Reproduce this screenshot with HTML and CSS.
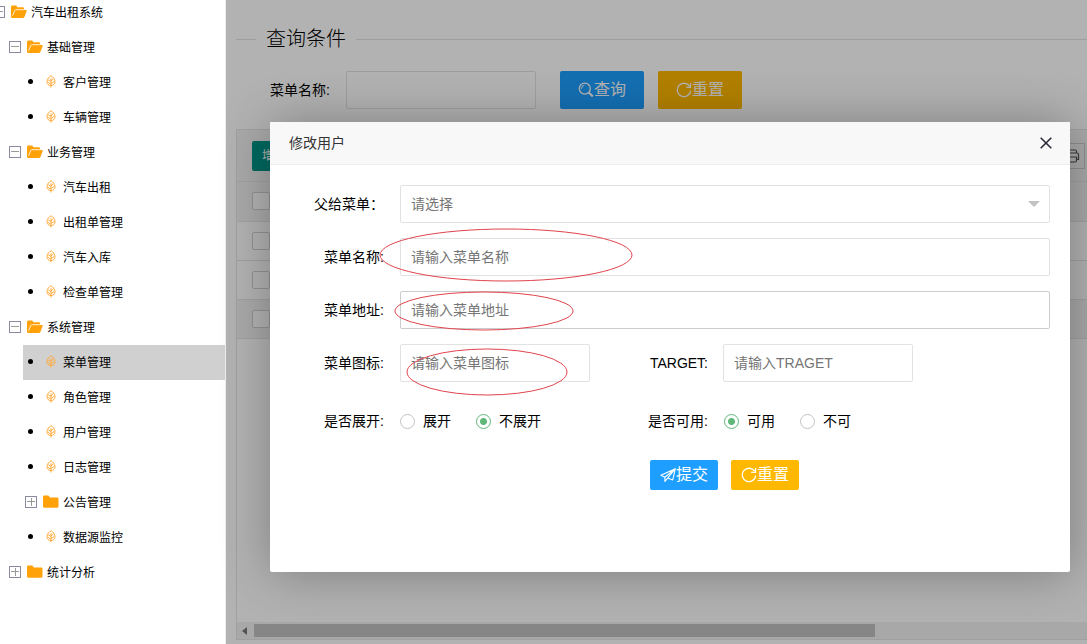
FILE: index.html
```
<!DOCTYPE html>
<html lang="zh-CN">
<head>
<meta charset="utf-8">
<title>汽车出租系统</title>
<link rel="stylesheet" href="styles.css">
</head>
<body>
<svg class="sprite" aria-hidden="true">
  <symbol id="i-open" viewBox="0 0 16 14"><path fill="#ffa20a" d="M0 11.800V2Q0 .6 1.400.6h3.400q.8 0 1.200.9l.3.700h5.500q1.300 0 1.300 1.200v1.500h1.600q1.500 0 1 1.200l-2.200 5.600q-.5 1.300-1.700 1.300H1.500Q0 13 0 11.800z"/><path fill="none" stroke="#fff" stroke-width=".8" d="M1.500 10.800 3.900 5.300q.3-.6 1-.6h8.200"/></symbol>
  <symbol id="i-folder" viewBox="0 0 16 14"><path fill="#ffa20a" d="M0 1.700Q0 .6 1.100.6h4q.7 0 1 .7l.6 1.200h7.700q1.100 0 1.100 1.100v8q0 1.100-1.100 1.100H1.100Q0 12.700 0 11.600z"/></symbol>
  <symbol id="i-leaf" viewBox="0 0 10 13"><path fill="none" stroke="#ffab3d" d="M5 .8C3.200 1.700 1 3.800 1 6.700c0 2.400 1.600 3.900 4 3.900s4-1.500 4-3.900C9 3.800 6.800 1.700 5 .8zM5 3.200v9.300M5 5.800 7.400 4M5 8.600l3.500-2.300M5 6.500 2.200 4.800M5 9.300 1.700 7.200"/></symbol>
  <symbol id="i-refresh" viewBox="0 0 16 16"><path fill="none" stroke="currentColor" stroke-width="1.300" d="M13.600 4.200A6.700 6.700 0 1 0 14.700 8.600M14.500 1v4.300h-4.300"/></symbol>
  <symbol id="i-search" viewBox="0 0 16 16"><g fill="none" stroke="currentColor"><circle cx="6.800" cy="6.600" r="5.500" stroke-width="1.300"/><path stroke-width="1" d="M3.500 6.800a3.300 3.300 0 0 1 2.800-3.400"/><path stroke-width="2.200" d="m11 10.800 3.800 3.700"/></g></symbol>
  <symbol id="i-send" viewBox="0 0 16 16"><path fill="none" stroke="currentColor" stroke-width="1.100" stroke-linejoin="round" d="M15.300 1.700.9 8.300l4 1.900L15.300 1.700 12.700 13l-5-1.900L15.300 1.700M4.900 10.200v4.200l2.800-3.300"/></symbol>
</svg>
<aside class="side">
  <nav class="tree" aria-label="菜单">
    <div class="node l0"><button class="toggle" aria-label="收起"></button><svg class="dir"><use href="#i-open"/></svg><span>汽车出租系统</span></div>
    <div class="node l1"><button class="toggle" aria-label="收起"></button><svg class="dir"><use href="#i-open"/></svg><span>基础管理</span></div>
    <div class="node l2"><i class="dot"></i><svg class="leaf"><use href="#i-leaf"/></svg><span>客户管理</span></div>
    <div class="node l2"><i class="dot"></i><svg class="leaf"><use href="#i-leaf"/></svg><span>车辆管理</span></div>
    <div class="node l1"><button class="toggle" aria-label="收起"></button><svg class="dir"><use href="#i-open"/></svg><span>业务管理</span></div>
    <div class="node l2"><i class="dot"></i><svg class="leaf"><use href="#i-leaf"/></svg><span>汽车出租</span></div>
    <div class="node l2"><i class="dot"></i><svg class="leaf"><use href="#i-leaf"/></svg><span>出租单管理</span></div>
    <div class="node l2"><i class="dot"></i><svg class="leaf"><use href="#i-leaf"/></svg><span>汽车入库</span></div>
    <div class="node l2"><i class="dot"></i><svg class="leaf"><use href="#i-leaf"/></svg><span>检查单管理</span></div>
    <div class="node l1"><button class="toggle" aria-label="收起"></button><svg class="dir"><use href="#i-open"/></svg><span>系统管理</span></div>
    <div class="node l2 active"><i class="dot"></i><svg class="leaf"><use href="#i-leaf"/></svg><span>菜单管理</span></div>
    <div class="node l2"><i class="dot"></i><svg class="leaf"><use href="#i-leaf"/></svg><span>角色管理</span></div>
    <div class="node l2"><i class="dot"></i><svg class="leaf"><use href="#i-leaf"/></svg><span>用户管理</span></div>
    <div class="node l2"><i class="dot"></i><svg class="leaf"><use href="#i-leaf"/></svg><span>日志管理</span></div>
    <div class="node l2"><button class="toggle plus" aria-label="展开"></button><svg class="dir"><use href="#i-folder"/></svg><span>公告管理</span></div>
    <div class="node l2"><i class="dot"></i><svg class="leaf"><use href="#i-leaf"/></svg><span>数据源监控</span></div>
    <div class="node l1"><button class="toggle plus" aria-label="展开"></button><svg class="dir"><use href="#i-folder"/></svg><span>统计分析</span></div>
  </nav>
</aside>
<main class="main">
  <fieldset class="title"><legend>查询条件</legend></fieldset>
  <form class="search">
    <label for="q">菜单名称:</label>
    <input class="input short" id="q" type="text">
    <button class="btn blue" type="button"><svg><use href="#i-search"/></svg>查询</button>
    <button class="btn amber" type="reset"><svg><use href="#i-refresh"/></svg>重置</button>
  </form>
  <section class="grid">
    <div class="toolbar">
      <button class="add" type="button">增加</button>
      <button class="print" type="button" aria-label="打印"><svg viewBox="0 0 16 16"><path fill="none" stroke="#555" stroke-width="1.200" stroke-linejoin="round" d="M3.500 5V2h7.500q1.500 0 1.500 1.500V5M3.500 11.500h-2V5H13q1.500 0 1.500 1.500v5h-2M3.500 9h9v3.500q0 1.500-1.500 1.500H3.500z"/></svg></button>
    </div>
    <table class="rows">
      <thead><tr><th><input type="checkbox" aria-label="全选"></th></tr></thead>
      <tbody>
        <tr><td><input type="checkbox" aria-label="选择"></td></tr>
        <tr><td><input type="checkbox" aria-label="选择"></td></tr>
        <tr class="hover"><td><input type="checkbox" aria-label="选择"></td></tr>
      </tbody>
    </table>
    <div class="scroll"><i class="arrow"></i><i class="thumb"></i></div>
  </section>
  <div class="shade"></div>
  <section class="modal" role="dialog" aria-labelledby="mt">
    <header class="modal-head">
      <h2 id="mt">修改用户</h2>
      <button class="close" type="button" aria-label="关闭"><svg viewBox="0 0 12 12"><path fill="none" stroke="#2d2c3b" stroke-width="1.600" d="m.7.7 10.600 10.600M11.300.7.7 11.300"/></svg></button>
    </header>
    <form class="form">
      <div class="item"><label class="label" for="parent">父给菜单：</label>
        <div class="select"><select class="input" id="parent"><option>请选择</option></select></div></div>
      <div class="item"><label class="label" for="name">菜单名称:</label><input class="input" id="name" type="text" placeholder="请输入菜单名称"></div>
      <div class="item"><label class="label" for="url">菜单地址:</label><input class="input hovered" id="url" type="text" placeholder="请输入菜单地址"></div>
      <div class="item"><label class="label" for="icon">菜单图标:</label><input class="input short" id="icon" type="text" placeholder="请输入菜单图标">
        <label class="label" for="target">TARGET:</label><input class="input short" id="target" type="text" placeholder="请输入TRAGET"></div>
      <div class="item radios">
        <span class="label" id="g1">是否展开:</span>
        <div class="group" role="radiogroup" aria-labelledby="g1">
          <label><input type="radio" name="spread">展开</label>
          <label><input type="radio" name="spread" checked>不展开</label>
        </div>
        <span class="label" id="g2">是否可用:</span>
        <div class="group" role="radiogroup" aria-labelledby="g2">
          <label><input type="radio" name="usable" checked>可用</label>
          <label><input type="radio" name="usable">不可</label>
        </div>
      </div>
      <div class="actions">
        <button class="btn small blue" type="button"><svg><use href="#i-send"/></svg>提交</button>
        <button class="btn small amber" type="reset"><svg><use href="#i-refresh"/></svg>重置</button>
      </div>
    </form>
    <svg class="marks" aria-hidden="true">
      <ellipse cx="236" cy="133" rx="126" ry="26"/>
      <ellipse cx="214" cy="189" rx="89" ry="19"/>
      <ellipse cx="217" cy="250" rx="80" ry="23"/>
    </svg>
  </section>
</main>
</body>
</html>
```
FILE: styles.css
```
* { box-sizing: border-box; }
body {
  margin: 0;
  display: flex;
  height: 100vh;
  overflow: hidden;
  background: #fff;
  color: #000;
  font: 14px/20px "Liberation Sans", "Noto Sans CJK SC", sans-serif;
}
button, input, select { font: inherit; margin: 0; }
button { padding: 0; border: 0; background: none; cursor: pointer; }
.sprite { position: absolute; width: 0; height: 0; }

/* Sidebar tree */
.side { flex: 0 0 225px; overflow: hidden; }
.tree { margin: -5px 0 0 -9px; font-size: 12px; }
.node { display: flex; align-items: center; gap: 4px; height: 35px; }
.l1 { margin-left: 16px; }
.l2 { margin-left: 32px; }
.active { background: #d0d0d0; }
.toggle {
  width: 12px;
  height: 12px;
  margin: 0 2px 2px;
  border: 1px solid #8a8aa0;
  background: linear-gradient(#999, #999) center / 8px 1px no-repeat;
}
.toggle.plus {
  background:
    linear-gradient(#999, #999) center / 8px 1px no-repeat,
    linear-gradient(#999, #999) center / 1px 8px no-repeat;
}
.dot { width: 5px; height: 5px; margin: 0 6px 2px 5px; border-radius: 50%; background: #000; }
.dir { width: 16px; height: 14px; margin-bottom: 2px; }
.leaf { width: 10px; height: 13px; margin: 0 3px 2px; }

/* Page content */
.main {
  position: relative;
  flex: 1;
  min-width: 0;
  display: flex;
  flex-direction: column;
  padding: 25px 0 4px 10px;
  border-left: 1px solid #eee;
}
.title { margin: 0; padding: 0; border: 0 solid #e2e2e2; border-top-width: 1px; }
.title legend { margin-left: 20px; padding: 0 10px; font-size: 20px; line-height: 28px; font-weight: 300; }
.search { display: flex; align-items: center; margin: 18px 0 20px 34px; }
.search .input { margin: 0 24px 0 16px; }
.search .btn { margin-right: 14px; }

.input {
  width: 100%;
  height: 38px;
  padding: 0 10px;
  border: 1px solid #e2e2e2;
  border-radius: 2px;
  background: #fff;
  color: #757575;
  outline: 0;
}
.input::placeholder { color: #757575; opacity: 1; }
.short { flex: none; width: 190px; }
.hovered { border-color: #ccc; }

.btn {
  display: flex;
  align-items: center;
  height: 38px;
  padding: 0 18px;
  border-radius: 2px;
  color: #fff;
  font-size: 16px;
}
.btn svg { width: 16px; height: 16px; }
.small { height: 30px; padding: 0 10px; }
.blue { background: #1e9fff; }
.amber { background: #ffb800; }

.grid {
  flex: 1;
  display: flex;
  flex-direction: column;
  border: 1px solid #e6e6e6;
  border-right: 0;
}
.toolbar {
  display: flex;
  align-items: center;
  justify-content: space-between;
  height: 52px;
  padding: 0 2px 0 15px;
  border-bottom: 1px solid #e6e6e6;
  background: #f2f2f2;
}
.add { height: 30px; padding: 0 10px; border-radius: 2px; background: #009688; color: #fff; font-size: 12px; }
.print { width: 26px; height: 26px; border: 1px solid #ccc; }
.print svg { display: block; width: 16px; height: 16px; margin: auto; }
.rows { width: 100%; border-collapse: collapse; }
.rows th, .rows td { height: 39px; padding: 0 15px; border-bottom: 1px solid #e6e6e6; text-align: left; }
.rows th, .hover { background: #f2f2f2; }
.rows input { display: block; appearance: none; width: 18px; height: 18px; border: 1px solid #d2d2d2; border-radius: 2px; background: #fff; }
.scroll { display: flex; align-items: center; height: 17px; margin-top: auto; background: #f1f1f1; }
.arrow { margin: 0 7px 0 5px; border: solid transparent; border-width: 4px 5px 4px 0; border-right-color: #777; }
.thumb { width: 73%; height: 13px; background: #c1c1c1; }

/* Dialog */
.shade { position: absolute; inset: 0; background: rgba(0, 0, 0, .3); }
.modal {
  position: absolute;
  top: 122px;
  left: 44px;
  right: 17px;
  min-height: 450px;
  border-radius: 2px;
  background: #fff;
  box-shadow: 1px 1px 50px rgba(0, 0, 0, .3);
}
.modal-head {
  display: flex;
  align-items: center;
  justify-content: space-between;
  height: 43px;
  padding: 0 18px 0 19px;
  border-bottom: 1px solid #eee;
  background: #f8f8f8;
}
.modal-head h2 { margin: 0; color: #333; font-size: 14px; font-weight: 400; }
.close svg { display: block; width: 12px; height: 12px; }
.form { padding: 20px 20px 0 0; }
.item { display: flex; align-items: center; margin-bottom: 15px; }
.label { flex: none; width: 130px; padding-right: 16px; text-align: right; }
.input + .label, .group + .label { width: 133px; padding-right: 15px; }
.select { position: relative; flex: 1; }
.select select { appearance: none; }
.select::after {
  content: "";
  position: absolute;
  top: 16px;
  right: 10px;
  border: solid transparent;
  border-width: 6px 6px 0;
  border-top-color: #c2c2c2;
}
.radios { height: 48px; }
.group { display: flex; width: 190px; }
.label + .group ~ .group { padding-left: 1px; }
.group label { display: flex; align-items: center; gap: 8px; margin-right: 25px; }
.group input { appearance: none; width: 15px; height: 15px; border: 1px solid #c2c2c2; border-radius: 50%; }
.group input:checked { border-color: #5fb878; background: radial-gradient(circle, #5fb878 3px, transparent 4px); }
.actions { display: flex; justify-content: center; gap: 13px; padding-left: 129px; }
.marks { position: absolute; inset: 0; width: 100%; height: 100%; pointer-events: none; }
.marks ellipse { fill: none; stroke: #e0444c; }
```
